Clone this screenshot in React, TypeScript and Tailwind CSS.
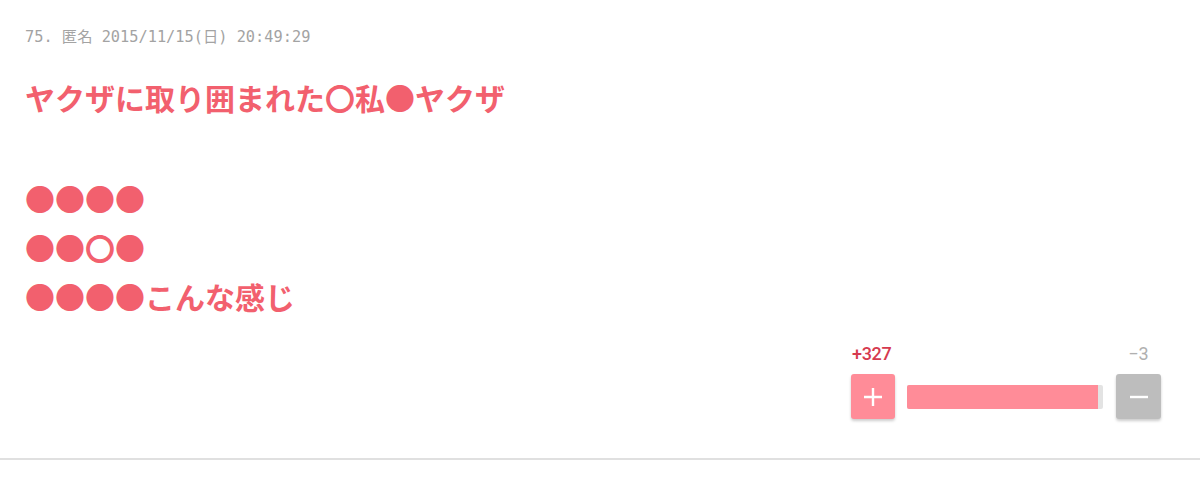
import React from "react";

export default function App() {
  const jp = { fontFamily: '"Noto Sans CJK JP", "Noto Sans", sans-serif' };
  const num = { fontFamily: 'Roboto, "Liberation Sans", sans-serif' };
  return (
    <div className="w-[1200px] h-[479px] bg-white overflow-hidden">
      <div className="pl-[25px] pr-[39px] pt-[27px] h-[460px] box-border border-b-2 border-[#e0e0e0]">
        <div
          className="text-[15.3px] leading-[20px] text-[#a3a3a3]"
          style={{ fontFamily: '"DejaVu Sans Mono", "Noto Sans CJK JP", monospace' }}
        >
          75. 匿名 2015/11/15(日) 20:49:29
        </div>
        <div className="mt-[30px] text-[#f2606e] font-bold text-[30px] leading-[40px]" style={jp}>
          <div>ヤクザに取り囲まれた〇私●ヤクザ</div>
          <div className="h-[50px]" />
          <div className="leading-[49px] mt-[7px]">●●●●</div>
          <div className="leading-[49px]">●●〇●</div>
          <div className="leading-[49px]">●●●●こんな感じ</div>
        </div>
        <div className="flex justify-end mt-[19px]">
          <div className="w-[310px]">
            <div className="flex justify-between items-end h-[24px]">
              <span className="text-[#d63a4f] text-[18px] leading-[20px] font-medium pl-[1px] tracking-[-0.3px]" style={num}>
                +327
              </span>
              <span className="text-[#b0b0b0] text-[18px] leading-[20px] w-[45px] text-center" style={num}>
                −3
              </span>
            </div>
            <div className="flex items-center mt-[10px] h-[45px]">
              <div className="w-[44px] h-[45px] rounded-[3px] bg-[#ff8c98] shadow-[0_2px_3px_rgba(0,0,0,0.2)] flex items-center justify-center">
                <svg width="20" height="20" viewBox="0 0 20 20">
                  <path d="M10 1v18M1 10h18" stroke="#fff" strokeWidth="2.4" />
                </svg>
              </div>
              <div className="ml-[12px] w-[196px] h-[24px] rounded-[2px] bg-[#e3e3e3] overflow-hidden flex">
                <div className="h-full bg-[#ff8c98] w-[191px]" />
              </div>
              <div className="ml-[13px] w-[45px] h-[45px] rounded-[3px] bg-[#bdbdbd] shadow-[0_2px_3px_rgba(0,0,0,0.2)] flex items-center justify-center">
                <svg width="20" height="20" viewBox="0 0 20 20">
                  <path d="M1 10h18" stroke="#fff" strokeWidth="2.4" />
                </svg>
              </div>
            </div>
          </div>
        </div>
      </div>
    </div>
  );
}
